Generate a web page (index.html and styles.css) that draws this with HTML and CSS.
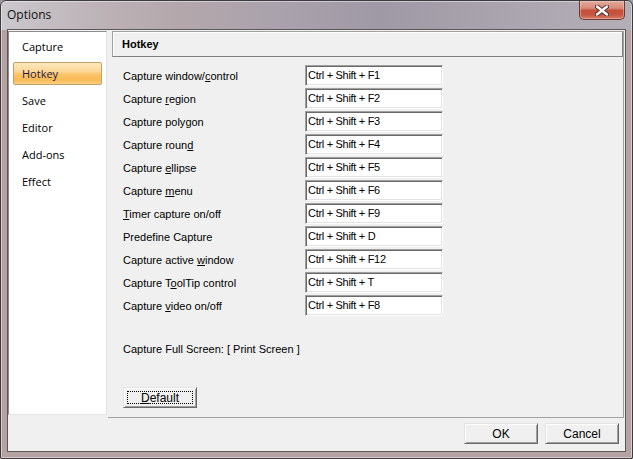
FILE: index.html
```html
<!DOCTYPE html>
<html>
<head>
  <title>Options</title>
  <link rel="stylesheet" href="styles.css">
</head>
<body>
  <div class="window">
    <div class="titlebar">
      <span class="title">Options</span>
      <div class="close">
        <svg width="14" height="11" viewBox="0 0 14 11">
          <path d="M2 1.5 L12 9.5 M12 1.5 L2 9.5" stroke="#4a2b2a" stroke-width="4.2" stroke-linecap="round"/>
          <path d="M2 1.5 L12 9.5 M12 1.5 L2 9.5" stroke="#ffffff" stroke-width="2.4" stroke-linecap="round"/>
        </svg>
      </div>
    </div>
    <div class="client">
      <div class="main">
        <ul class="nav">
          <li>Capture</li>
          <li class="selected">Hotkey</li>
          <li>Save</li>
          <li>Editor</li>
          <li>Add-ons</li>
          <li>Effect</li>
        </ul>
        <div class="panel">
          <div class="panel-head">Hotkey</div>
          <div class="rows">
            <div class="row"><span class="label">Capture window/<u>c</u>ontrol</span><span class="keybox">Ctrl + Shift + F1</span></div>
            <div class="row"><span class="label">Capture <u>r</u>egion</span><span class="keybox">Ctrl + Shift + F2</span></div>
            <div class="row"><span class="label">Capture poly<u>g</u>on</span><span class="keybox">Ctrl + Shift + F3</span></div>
            <div class="row"><span class="label">Capture roun<u>d</u></span><span class="keybox">Ctrl + Shift + F4</span></div>
            <div class="row"><span class="label">Capture <u>e</u>llipse</span><span class="keybox">Ctrl + Shift + F5</span></div>
            <div class="row"><span class="label">Capture <u>m</u>enu</span><span class="keybox">Ctrl + Shift + F6</span></div>
            <div class="row"><span class="label"><u>T</u>imer capture on/off</span><span class="keybox">Ctrl + Shift + F9</span></div>
            <div class="row"><span class="label">Predefine Capture</span><span class="keybox">Ctrl + Shift + D</span></div>
            <div class="row"><span class="label">Capture active <u>w</u>indow</span><span class="keybox">Ctrl + Shift + F12</span></div>
            <div class="row"><span class="label">Capture T<u>o</u>olTip control</span><span class="keybox">Ctrl + Shift + T</span></div>
            <div class="row"><span class="label">Capture <u>v</u>ideo on/off</span><span class="keybox">Ctrl + Shift + F8</span></div>
          </div>
          <p class="fullscreen">Capture Full Screen: [ Print Screen ]</p>
          <div class="btn default"><span class="focus"><u>D</u>efault</span></div>
        </div>
      </div>
      <div class="footer">
        <div class="btn">OK</div>
        <div class="btn">Cancel</div>
      </div>
    </div>
  </div>
</body>
</html>
```

FILE: styles.css
```css
html, body {
  margin: 0;
  padding: 0;
  background: #9f99a5;
}
.window {
  width: 633px;
  height: 459px;
  box-sizing: border-box;
  padding: 0 6px 6px 6px;
  border: 1px solid #3d3a40;
  border-radius: 6px 6px 2px 2px;
  background:
    linear-gradient(90deg, #cbc8cd 0%, #bfb7bb 12%, #b3a7ab 28%, #a9a2ac 45%, #9f99a5 60%, #aaa4ae 80%, #b4afb7 100%) top / 100% 29px no-repeat,
    #b3a2a1;
  box-shadow: inset 0 0 0 1px rgba(255, 255, 255, 0.45);
  display: flex;
  flex-direction: column;
  font-family: "Liberation Sans", Arial, sans-serif;
  font-size: 11px;
  color: #000;
}
.titlebar {
  height: 28px;
  display: flex;
  align-items: flex-start;
}
.title {
  font-family: "Open Sans", "Noto Sans", sans-serif;
  font-size: 12px;
  line-height: 28px;
  color: #111;
}
.close {
  margin-left: auto;
  margin-right: 1px;
  width: 46px;
  height: 19px;
  box-sizing: border-box;
  border: 1px solid #6a3a34;
  border-top: none;
  border-radius: 0 0 5px 5px;
  background: linear-gradient(#e4aa9c 0%, #d68a78 40%, #c5503a 52%, #c4553f 75%, #d77c66 100%);
  box-shadow: inset 0 0 0 1px rgba(255, 220, 210, 0.4);
  display: flex;
  align-items: center;
  justify-content: center;
}
.close svg {
  display: block;
}
.client {
  flex: 1;
  border: 1px solid #5d5658;
  background: #f0f0f0;
  display: flex;
  flex-direction: column;
}
.main {
  height: 388px;
  display: flex;
  align-items: flex-start;
}
.nav {
  list-style: none;
  margin: 1px 0 0 0;
  padding: 3px 0 0 0;
  width: 99px;
  height: 384px;
  box-sizing: border-box;
  background: #fff;
  border-top: 1px solid #8c8c8c;
  border-left: 1px solid #8c8c8c;
  border-right: 1px solid #e3e3e3;
  border-bottom: 1px solid #e3e3e3;
  font-family: "Open Sans", "Noto Sans", sans-serif;
  font-size: 11px;
}
.nav li {
  height: 23px;
  line-height: 21px;
  margin: 0 4px 4px 4px;
  padding-left: 8px;
  box-sizing: border-box;
  border: 1px solid transparent;
}
.nav li.selected {
  border-color: #c2a06a;
  border-radius: 2px;
  background: linear-gradient(#fde9bd 0%, #fcd797 40%, #fbc468 55%, #f9bb55 80%, #fccf82 100%);
  color: #1d1a4c;
}
.panel {
  margin: 1px 0 0 1px;
  width: 516px;
  height: 387px;
  box-sizing: border-box;
  border-right: 1px solid #a0a0a0;
  border-bottom: 1px solid #a0a0a0;
}
.panel-head {
  margin-left: 4px;
  height: 26px;
  box-sizing: border-box;
  border: 1px solid #a0a0a0;
  border-right-color: #808080;
  border-bottom-color: #808080;
  box-shadow: inset 1px 1px #fff;
  padding-left: 9px;
  line-height: 24px;
  font-weight: bold;
}
.rows {
  margin-top: 8px;
  padding-left: 15px;
}
.row {
  display: flex;
  align-items: center;
  height: 21px;
  margin-bottom: 2px;
}
.label {
  width: 182px;
}
.keybox {
  width: 138px;
  height: 21px;
  box-sizing: border-box;
  background: #fff;
  border-top: 1px solid #a0a0a0;
  border-left: 1px solid #a0a0a0;
  border-right: 1px solid #fff;
  border-bottom: 1px solid #fff;
  box-shadow: inset 1px 1px #696969, inset -1px -1px #e3e3e3;
  padding-left: 2px;
  line-height: 19px;
  letter-spacing: -0.3px;
}
.fullscreen {
  margin: 26px 0 0 15px;
  line-height: 14px;
}
.btn {
  width: 74px;
  height: 21px;
  box-sizing: border-box;
  background: #f0f0f0;
  border: 1px solid;
  border-color: #e3e3e3 #696969 #696969 #e3e3e3;
  box-shadow: inset 1px 1px #fff, inset -1px -1px #a0a0a0;
  display: flex;
  align-items: center;
  justify-content: center;
  font-size: 12px;
}
.default {
  margin: 31px 0 0 15px;
  padding: 3px;
}
.focus {
  flex: 1;
  align-self: stretch;
  border: 1px dotted #000;
  display: flex;
  align-items: center;
  justify-content: center;
}
.footer {
  flex: 1;
  display: flex;
  justify-content: flex-end;
  align-items: flex-start;
  gap: 7px;
  padding: 5px 6px 0 0;
}
```
